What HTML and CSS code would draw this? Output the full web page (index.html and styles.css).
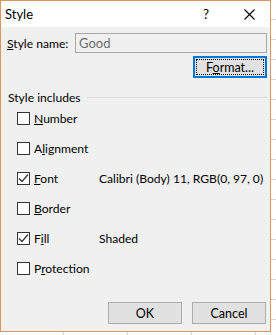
FILE: index.html
```html
<!DOCTYPE html>
<html>
<head>
<meta charset="utf-8">
<link rel="stylesheet" href="styles.css">
</head>
<body>
<div class="window">
  <div class="titlebar">
    <span class="title">Style</span>
    <span class="help">?</span>
    <span class="close"><svg width="11" height="11" viewBox="0 0 11 11"><path d="M0.5 0.5 L10.5 10.5 M10.5 0.5 L0.5 10.5" stroke="#000" stroke-width="1.1" fill="none"/></svg></span>
  </div>
  <div class="content">
    <div class="name-row">
      <label class="name-label"><u>S</u>tyle name:</label>
      <div class="name-input">Good</div>
    </div>
    <div class="format-row">
      <button class="btn btn-focus">F<u>o</u>rmat...</button>
    </div>
    <div class="group-head">
      <span>Style includes</span>
      <div class="sep"></div>
    </div>
    <div class="items">
      <div class="item"><span class="box"></span><span class="lbl"><u>N</u>umber</span></div>
      <div class="item"><span class="box"></span><span class="lbl">A<u>l</u>ignment</span></div>
      <div class="item"><span class="box"><svg width="11" height="11" viewBox="0 0 11 11"><path d="M1 5.5 L4 8.5 L10 1.5" stroke="#333" stroke-width="1.2" fill="none"/></svg></span><span class="lbl"><u>F</u>ont</span><span class="val">Calibri (Body) 11, RGB(0, 97, 0)</span></div>
      <div class="item"><span class="box"></span><span class="lbl"><u>B</u>order</span></div>
      <div class="item"><span class="box"><svg width="11" height="11" viewBox="0 0 11 11"><path d="M1 5.5 L4 8.5 L10 1.5" stroke="#333" stroke-width="1.2" fill="none"/></svg></span><span class="lbl">F<u>i</u>ll</span><span class="val">Shaded</span></div>
      <div class="item"><span class="box"></span><span class="lbl">P<u>r</u>otection</span></div>
    </div>
    <div class="buttons">
      <button class="btn">OK</button>
      <button class="btn">Cancel</button>
    </div>
  </div>
</div>
</body>
</html>
```

FILE: styles.css
```css
html, body {
  margin: 0;
  padding: 0;
}
body {
  width: 276px;
  height: 335px;
  overflow: hidden;
  background-color: #ffffff;
  background-image:
    repeating-linear-gradient(to bottom, transparent 0, transparent 19px, #d4d4d4 19px, #d4d4d4 20px),
    repeating-linear-gradient(to right, transparent 0, transparent 63px, #d4d4d4 63px, #d4d4d4 64px);
  font-family: Lato, "Noto Sans", sans-serif;
  font-size: 12.1px;
  color: #000;
}
.window {
  width: 269px;
  height: 330px;
  border: 1px solid #d9975f;
  background: #f0f0f0;
  display: flex;
  flex-direction: column;
}
.titlebar {
  height: 26px;
  background: #ffffff;
  display: flex;
  align-items: center;
  position: relative;
}
.title {
  margin-left: 4px;
  font-size: 13px;
}
.help {
  position: absolute;
  left: 202px;
  top: 5px;
  font-size: 13.5px;
}
.close {
  position: absolute;
  left: 243px;
  top: 8px;
  display: flex;
}
.content {
  flex: 1;
  display: flex;
  flex-direction: column;
  padding: 6px 3px 0 6px;
}
.name-row {
  display: flex;
  align-items: center;
  height: 20px;
}
.name-label {
  width: 68px;
  white-space: nowrap;
}
.name-input {
  flex: 1;
  height: 18px;
  border: 1px solid #a8a8a8;
  background: #f0f0f0;
  color: #6d6d6d;
  padding-left: 3px;
  line-height: 18px;
  font-size: 13px;
}
.format-row {
  display: flex;
  justify-content: flex-end;
  margin-top: 3px;
}
.btn {
  font-family: inherit;
  font-size: 12.5px;
  color: #000;
  width: 74px;
  height: 22px;
  border: 1px solid #adadad;
  background: #e1e1e1;
  padding: 0;
  margin: 0;
}
.btn-focus {
  border: 2px solid #0078d7;
  outline: 1px dotted #000;
  outline-offset: -4px;
}
.group-head {
  display: flex;
  align-items: center;
  margin-top: 11px;
  height: 16px;
  padding-left: 1px;
}
.sep {
  flex: 1;
  height: 1px;
  background: #dcdcdc;
  margin-left: 6px;
}
.items {
  margin-top: -2px;
  display: flex;
  flex-direction: column;
}
.item {
  display: flex;
  align-items: center;
  height: 30px;
  padding-left: 10px;
  white-space: nowrap;
}
.box {
  width: 11px;
  height: 11px;
  border: 1px solid #333333;
  background: #ffffff;
  display: flex;
  align-items: center;
  justify-content: center;
  flex: none;
}
.lbl {
  margin-left: 4px;
  width: 65px;
  flex: none;
}
.buttons {
  display: flex;
  justify-content: flex-end;
  gap: 10px;
  margin-top: 19px;
  padding-right: 1px;
}
```
